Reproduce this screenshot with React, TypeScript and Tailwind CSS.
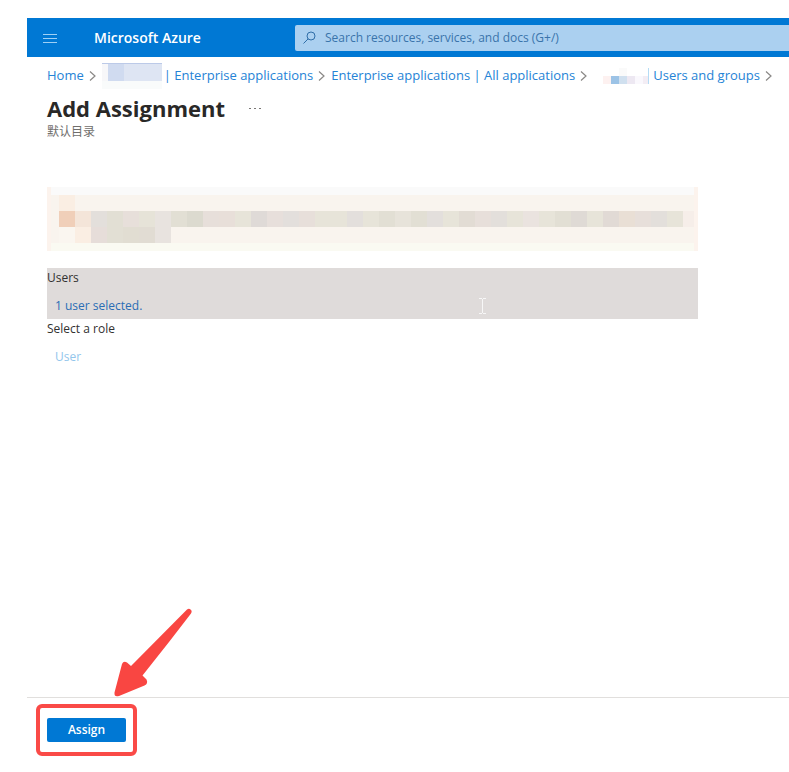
import { Fragment } from "react";

type Crumb = { label: string; mask?: "wide" | "narrow" };

const crumbs: Crumb[] = [
  { label: "Home" },
  { label: "| Enterprise applications", mask: "wide" },
  { label: "Enterprise applications | All applications" },
  { label: "Users and groups", mask: "narrow" },
];

// Redacted notice text, one colour per block
const noticeRows = [
  ["#faeee3"],
  [
    "#f0cfb9", "#f4e5d9", "#e3dfdb", "#e2dfd4", "#e7dfda", "#e6e3d8", "#e8e3df", "#e2dfd4",
    "#dcdacf", "#e7dfda", "#e8dfd9", "#e7e4d9", "#dfdad7", "#e7dfdb", "#e3dfdc", "#e7dfda",
    "#e7e4d9", "#e7e4d9", "#e3dfdc", "#e7e4d9", "#e2dfd4", "#e7e3da", "#e2dfd4", "#e3dfdc",
    "#e7e4d9", "#e2dcd4", "#e7dfda", "#e3dfdb", "#e7e4d9", "#eae3df", "#e7e4d9", "#e2dfd4",
    "#dfdad5", "#e7e4d9", "#e1dad5", "#e9dfd5", "#e7dfda", "#e3dfdb", "#e7e4d9", "#f6eee9",
  ],
  ["#faf6f0", "#faeee3", "#e6ddd9", "#e2dfd4", "#e1ddd2", "#e1dcd3", "#e8e3df"],
];

function Chevron() {
  return (
    <svg className="h-3 w-2 shrink-0" viewBox="0 0 8 12" fill="none" stroke="#8a8886" strokeWidth="1.2" aria-hidden="true">
      <path d="M1 1.500 6 6 1 10.500" />
    </svg>
  );
}

function WideMask() {
  return (
    <span className="mr-[2px] flex h-[26px] w-[60px] shrink-0 flex-col border-t border-[#bccae8]" aria-hidden="true">
      <span className="flex h-[17px]">
        <span className="w-[6px] bg-[#f7f7f9]" />
        <span className="w-4 bg-[#d0dbf0]" />
        <span className="flex-1 bg-[#dee5f3]" />
      </span>
      <span className="flex-1 bg-[#f9fbfb]" />
    </span>
  );
}

function NarrowMask() {
  return (
    <span className="mr-1 ml-[10px] flex h-4 w-[46px] shrink-0 items-end border-r border-[#b5dcf5]" aria-hidden="true">
      <span className="h-2 w-2 bg-[#fdf1f0]" />
      <span className="h-2 w-2 bg-[#9cc3e6]" />
      <span className="flex h-4 w-2 flex-col">
        <span className="h-2 bg-[#fafafa]" />
        <span className="h-2 bg-[#d0e0ef]" />
      </span>
      <span className="h-2 w-2 bg-[#ede8f2]" />
      <span className="h-2 w-2 bg-[#faf8fd]" />
      <span className="h-2 flex-1 bg-[#f3edf4]" />
    </span>
  );
}

function TopBar() {
  return (
    <header className="flex h-[39px] items-center bg-[#0078d4] pl-[15px]">
      <button type="button" aria-label="Show portal menu" className="text-[#9fd0f5]">
        <svg className="h-4 w-4" viewBox="0 0 16 16" stroke="currentColor" aria-hidden="true">
          <path d="M1 4.500h14M1 8.500h14M1 12.500h14" />
        </svg>
      </button>
      <a href="#" className="ml-9 w-[201px] shrink-0 text-[14px] font-semibold text-white">
        Microsoft Azure
      </a>
      <label className="flex h-[26px] min-w-0 flex-1 items-center gap-[9px] rounded-l-xs bg-[#abd0f0] pl-2 text-[#2f6ea8]">
        <svg className="h-[13px] w-[13px] shrink-0" viewBox="0 0 13 13" fill="none" stroke="currentColor" aria-hidden="true">
          <circle cx="8" cy="5" r="4" />
          <path d="M5.200 7.800.5 12.500" />
        </svg>
        <input
          type="text"
          aria-label="Search"
          placeholder="Search resources, services, and docs (G+/)"
          className="min-w-0 flex-1 bg-transparent text-[12px] outline-none placeholder:text-[#3a74ab]"
        />
      </label>
    </header>
  );
}

function Breadcrumb() {
  return (
    <nav aria-label="Breadcrumb" className="flex h-9 items-center gap-[5px] overflow-hidden pt-[2px] pl-5 text-[13px] whitespace-nowrap">
      {crumbs.map((crumb) => (
        <Fragment key={crumb.label}>
          <a href="#" className="flex items-center text-[#2583d6]">
            {crumb.mask === "wide" && <WideMask />}
            {crumb.mask === "narrow" && <NarrowMask />}
            {crumb.label}
          </a>
          <Chevron />
        </Fragment>
      ))}
    </nav>
  );
}

function Notice() {
  return (
    <div className="border-x-4 border-[#fcf3ed] bg-[#f9f4ee]" role="img" aria-label="Notice">
      <div className="h-2 bg-[#fafafa]" />
      {noticeRows.map((row, i) => (
        <div key={i} className="flex h-4 overflow-hidden pl-2">
          {row.map((color, j) => (
            <span key={j} className="w-4 shrink-0" style={{ backgroundColor: color }} />
          ))}
        </div>
      ))}
      <div className="h-2 bg-[#fafaf2]" />
    </div>
  );
}

function TextCursor() {
  return (
    <svg
      className="absolute top-[30px] left-[432px] h-4 w-[7px]"
      viewBox="0 0 7 16"
      stroke="#f7f7f7"
      fill="none"
      aria-hidden="true"
    >
      <path d="M0 .5h3M4 .5h3M3.500 1v14M0 15.500h3M4 15.500h3" />
    </svg>
  );
}

export default function App() {
  return (
    <div className="flex min-h-screen flex-col bg-white pt-[18px] pl-[27px] font-['Open_Sans','Noto_Sans_CJK_SC',sans-serif] text-[#323130]">
      <TopBar />
      <Breadcrumb />

      <main className="flex-1 pl-5">
        <div className="flex items-center gap-6">
          <h1 className="text-[22px] leading-[30px] font-bold text-[#292827]">Add Assignment</h1>
          <button type="button" aria-label="More actions" className="flex gap-[3px]">
            <span className="h-px w-[2px] bg-[#797775]" />
            <span className="h-px w-[2px] bg-[#797775]" />
            <span className="h-px w-[2px] bg-[#797775]" />
          </button>
        </div>
        <p className="text-[12px] leading-[18px] text-[#706e6c]">默认目录</p>

        <div className="mt-[46px] max-w-[651px]">
          <Notice />
          <section className="relative mt-[17px] h-[51px] bg-[#dfdbda] text-[12px]">
            <h2 className="leading-5">Users</h2>
            <a href="#" className="mt-2 ml-2 inline-block leading-5 text-[#2a6db5]">
              1 user selected.
            </a>
            <TextCursor />
          </section>
          <section className="text-[12px]">
            <h2 className="leading-5">Select a role</h2>
            <a href="#" className="mt-2 ml-2 inline-block leading-5 text-[#93c6ec]">
              User
            </a>
          </section>
        </div>
      </main>

      <footer className="relative flex h-[75px] items-start border-t border-[#e1dfdd] pt-5 pl-5">
        <div className="relative">
          <button
            type="button"
            className="block h-6 w-[79px] rounded-xs bg-[#0078d4] text-[12px] leading-6 font-semibold text-white"
          >
            Assign
          </button>
          <span className="pointer-events-none absolute -inset-x-[11px] -inset-y-[14px] rounded-md border-4 border-[#fa4a47]" />
        </div>
        <svg
          className="pointer-events-none absolute bottom-[74px] left-[84px] h-[92px] w-[84px]"
          viewBox="0 0 84 92"
          fill="#f94642"
          aria-hidden="true"
        >
          <path d="M76 3.500Q78 2 79.500 3.500Q81.500 5 80 7.500L58 36L31.500 69.500L35.500 73.500Q37.500 77.500 33.500 79.500L8 90Q3 91.500 3.500 86.500L11 58Q12.500 54.500 16 56.500L20 60Z" />
        </svg>
      </footer>
    </div>
  );
}
